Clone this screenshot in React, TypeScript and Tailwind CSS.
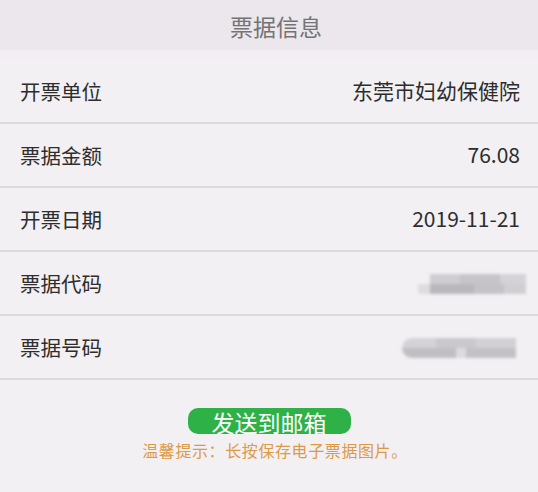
import React from "react";

const rows: { label: string; value?: string; blur?: "code" | "number" }[] = [
	{ label: "开票单位", value: "东莞市妇幼保健院" },
	{ label: "票据金额", value: "76.08" },
	{ label: "开票日期", value: "2019-11-21" },
	{ label: "票据代码", blur: "code" },
	{ label: "票据号码", blur: "number" },
];

const font = {
	fontFamily: '"Noto Sans CJK SC", "Liberation Sans", sans-serif',
};

export default function App() {
	return (
		<div
			className="w-[538px] h-[492px] bg-[#f2f0f3] flex flex-col overflow-hidden text-[#2d2d2d]"
			style={font}
		>
			{/* Header */}
			<div className="h-[50px] shrink-0 bg-[#ece6ed] flex items-center justify-center pl-[14px] pt-[3px] text-[23px] text-[#747474]">
				票据信息
			</div>
			<div className="h-[10px] shrink-0 bg-[#f3eef4]" />

			{/* Rows */}
			<div className="flex flex-col">
				{rows.map((r) => (
					<div
						key={r.label}
						className="h-[64px] flex items-center justify-between pl-5 pr-[18px] border-b-2 border-[#dcdadd]"
					>
						<span className="text-[20.5px]">{r.label}</span>
						{r.value ? (
							<span className="text-[21px]">{r.value}</span>
						) : r.blur === "code" ? (
							<div className="flex flex-col blur-[1.5px] -mr-[6px] mt-[2px]">
								<div className="flex ml-[12px]">
									<div className="w-[30px] h-[10px] bg-[#cfcdd1]" />
									<div className="w-[40px] h-[10px] bg-[#c6c4c8]" />
									<div className="w-[26px] h-[10px] bg-[#d4d2d6]" />
								</div>
								<div className="flex">
									<div className="w-[12px] h-[10px] bg-[#dedce0]" />
									<div className="w-[44px] h-[10px] bg-[#b9b7bb]" />
									<div className="w-[30px] h-[10px] bg-[#c4c2c6]" />
									<div className="w-[22px] h-[10px] bg-[#d0ced2]" />
								</div>
							</div>
						) : (
							<div className="flex flex-col blur-[1.5px] mr-[4px] mt-[2px]">
								<div className="flex">
									<div className="w-[34px] h-[10px] bg-[#d4d2d6] rounded-tl-full" />
									<div className="w-[40px] h-[10px] bg-[#cac8cc]" />
									<div className="w-[40px] h-[10px] bg-[#d2d0d4]" />
								</div>
								<div className="flex">
									<div className="w-[54px] h-[10px] bg-[#c0bec2] rounded-bl-full" />
									<div className="w-[10px] h-[10px] bg-[#dcdade]" />
									<div className="w-[50px] h-[10px] bg-[#c3c1c5]" />
								</div>
							</div>
						)}
					</div>
				))}
			</div>

			{/* Footer */}
			<div className="flex flex-col items-center pt-[28px]">
				<button className="w-[163px] h-[26px] rounded-[10px] bg-[#2eb147] text-white text-[23px] leading-[30px] flex justify-center overflow-visible">
					<span className="-mt-[1px]">发送到邮箱</span>
				</button>
				<div className="mt-[4px] pl-[12px] text-[16px] text-[#dc9a47] tracking-[0.6px]">
					温馨提示：长按保存电子票据图片。
				</div>
			</div>
		</div>
	);
}
